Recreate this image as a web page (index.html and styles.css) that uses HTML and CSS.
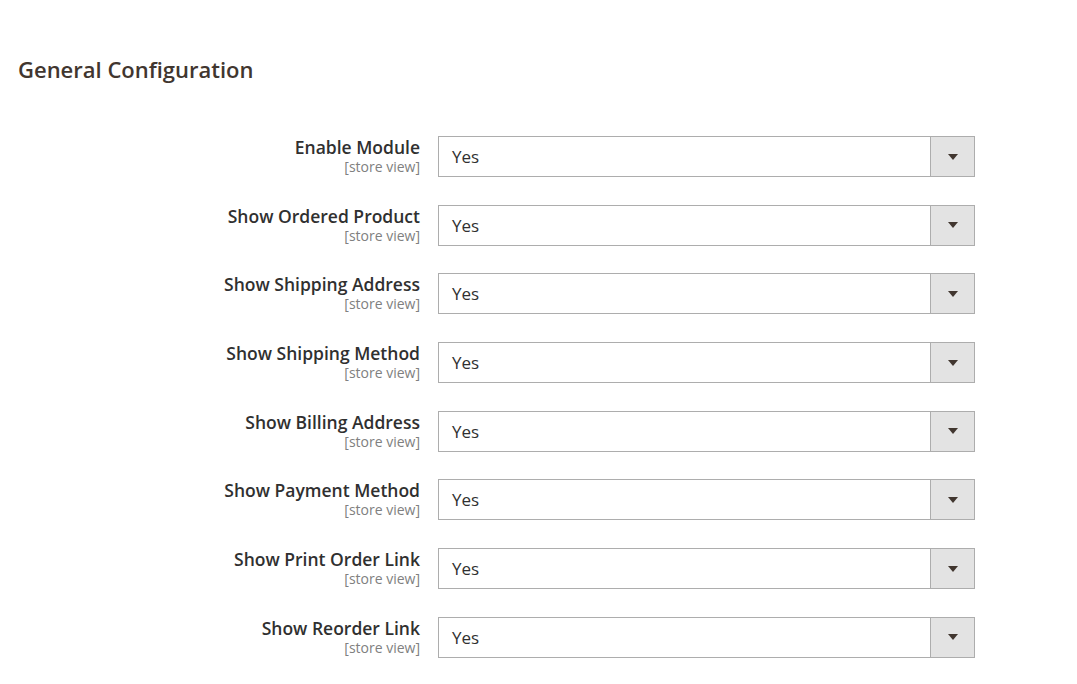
FILE: index.html
```html
<!DOCTYPE html>
<html>
<head>
<meta charset="utf-8">
<link rel="stylesheet" href="styles.css">
</head>
<body>
<div class="page">
  <h2 class="title">General Configuration</h2>
  <div class="form">
    <div class="row"><div class="label"><span class="name">Enable Module</span><span class="scope">[store view]</span></div><div class="select"><span class="value">Yes</span><span class="arrow"></span></div></div>
    <div class="row"><div class="label"><span class="name">Show Ordered Product</span><span class="scope">[store view]</span></div><div class="select"><span class="value">Yes</span><span class="arrow"></span></div></div>
    <div class="row"><div class="label"><span class="name">Show Shipping Address</span><span class="scope">[store view]</span></div><div class="select"><span class="value">Yes</span><span class="arrow"></span></div></div>
    <div class="row"><div class="label"><span class="name">Show Shipping Method</span><span class="scope">[store view]</span></div><div class="select"><span class="value">Yes</span><span class="arrow"></span></div></div>
    <div class="row"><div class="label"><span class="name">Show Billing Address</span><span class="scope">[store view]</span></div><div class="select"><span class="value">Yes</span><span class="arrow"></span></div></div>
    <div class="row"><div class="label"><span class="name">Show Payment Method</span><span class="scope">[store view]</span></div><div class="select"><span class="value">Yes</span><span class="arrow"></span></div></div>
    <div class="row"><div class="label"><span class="name">Show Print Order Link</span><span class="scope">[store view]</span></div><div class="select"><span class="value">Yes</span><span class="arrow"></span></div></div>
    <div class="row"><div class="label"><span class="name">Show Reorder Link</span><span class="scope">[store view]</span></div><div class="select"><span class="value">Yes</span><span class="arrow"></span></div></div>
  </div>
</div>
</body>
</html>
```
FILE: styles.css
```css
html, body {
  margin: 0;
  padding: 0;
  background: #fff;
}
body {
  font-family: "Open Sans", "Liberation Sans", sans-serif;
  color: #303030;
}
.page {
  padding: 54px 0 0 18px;
}
.title {
  margin: 0;
  font-size: 22px;
  font-weight: 600;
  color: #41362f;
  line-height: 30px;
}
.form {
  margin-top: 52px;
  display: flex;
  flex-direction: column;
  gap: 27.7px;
}
.row {
  display: flex;
  align-items: flex-start;
}
.label {
  width: 402px;
  display: flex;
  flex-direction: column;
  align-items: flex-end;
}
.name {
  font-size: 17.5px;
  font-weight: 600;
  line-height: 22px;
  color: #303030;
}
.scope {
  font-size: 14px;
  line-height: 18px;
  color: #808080;
  margin-top: 0;
}
.select {
  margin-left: 18px;
  width: 537px;
  height: 41px;
  box-sizing: border-box;
  border: 1px solid #adadad;
  display: flex;
  align-items: center;
  background: #fff;
}
.value {
  flex: 1;
  padding-left: 13px;
  font-size: 17px;
  color: #303030;
}
.arrow {
  width: 43px;
  height: 100%;
  background: #e3e3e3;
  border-left: 1px solid #adadad;
  display: flex;
  align-items: center;
  justify-content: center;
}
.arrow::after {
  content: "";
  width: 0;
  height: 0;
  border-left: 5px solid transparent;
  border-right: 5px solid transparent;
  border-top: 6px solid #41362f;
}
```
